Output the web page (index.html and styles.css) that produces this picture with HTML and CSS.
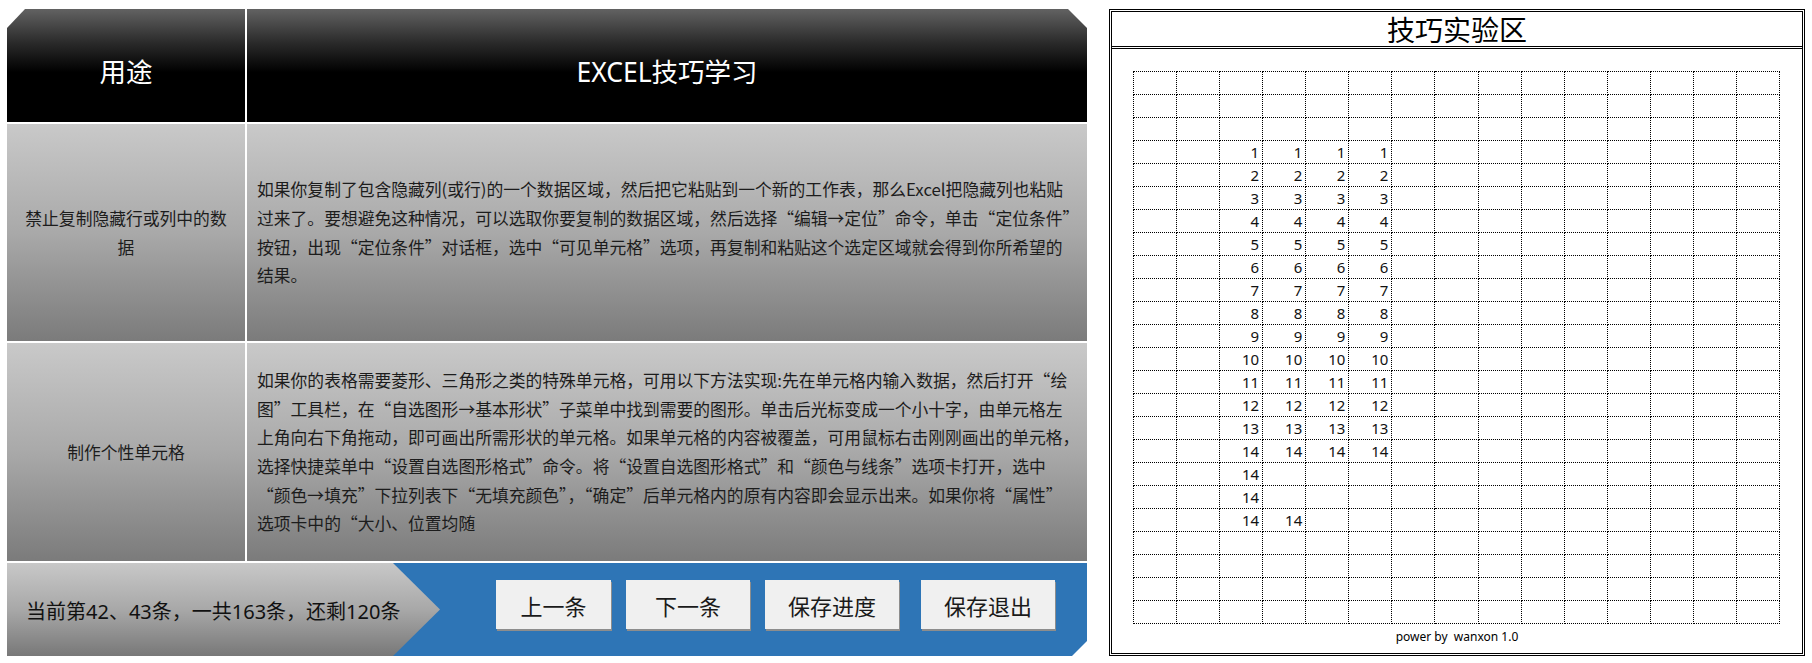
FILE: index.html
```html
<!DOCTYPE html>
<html lang="zh-CN">
<head>
<meta charset="utf-8">
<title>EXCEL技巧学习</title>
<link rel="stylesheet" href="styles.css">
</head>
<body>
<section class="board">
  <div class="board-head">用途</div>
  <div class="board-head">EXCEL技巧学习</div>

  <div class="board-cell use">禁止复制隐藏行或列中的数据</div>
  <div class="board-cell tip"><p>如果你复制了包含隐藏列(或行)的一个数据区域，然后把它粘贴到一个新的工作表，那么Excel把隐藏列也粘贴<br>过来了。要想避免这种情况，可以选取你要复制的数据区域，然后选择“编辑→定位”命令，单击“定位条件”<br>按钮，出现“定位条件”对话框，选中“可见单元格”选项，再复制和粘贴这个选定区域就会得到你所希望的<br>结果。</p></div>

  <div class="board-cell use">制作个性单元格</div>
  <div class="board-cell tip"><p>如果你的表格需要菱形、三角形之类的特殊单元格，可用以下方法实现:先在单元格内输入数据，然后打开“绘<br>图”工具栏，在“自选图形→基本形状”子菜单中找到需要的图形。单击后光标变成一个小十字，由单元格左<br>上角向右下角拖动，即可画出所需形状的单元格。如果单元格的内容被覆盖，可用鼠标右击刚刚画出的单元格，<br>选择快捷菜单中“设置自选图形格式”命令。将“设置自选图形格式”和“颜色与线条”选项卡打开，选中<br>“颜色→填充”下拉列表下“无填充颜色”，“确定”后单元格内的原有内容即会显示出来。如果你将“属性”<br>选项卡中的“大小、位置均随</p></div>

  <footer class="board-foot">
    <div class="status">当前第42、43条，一共163条，还剩120条</div>
    <div class="actions">
      <button class="btn btn-prev">上一条</button>
      <button class="btn btn-next">下一条</button>
      <button class="btn">保存进度</button>
      <button class="btn btn-exit">保存退出</button>
    </div>
  </footer>
</section>

<section class="lab">
  <h1 class="lab-title">技巧实验区</h1>
  <table class="sheet">
    <tr><td></td><td></td><td></td><td></td><td></td><td></td><td></td><td></td><td></td><td></td><td></td><td></td><td></td><td></td><td></td></tr>
    <tr><td></td><td></td><td></td><td></td><td></td><td></td><td></td><td></td><td></td><td></td><td></td><td></td><td></td><td></td><td></td></tr>
    <tr><td></td><td></td><td></td><td></td><td></td><td></td><td></td><td></td><td></td><td></td><td></td><td></td><td></td><td></td><td></td></tr>
    <tr><td></td><td></td><td>1</td><td>1</td><td>1</td><td>1</td><td></td><td></td><td></td><td></td><td></td><td></td><td></td><td></td><td></td></tr>
    <tr><td></td><td></td><td>2</td><td>2</td><td>2</td><td>2</td><td></td><td></td><td></td><td></td><td></td><td></td><td></td><td></td><td></td></tr>
    <tr><td></td><td></td><td>3</td><td>3</td><td>3</td><td>3</td><td></td><td></td><td></td><td></td><td></td><td></td><td></td><td></td><td></td></tr>
    <tr><td></td><td></td><td>4</td><td>4</td><td>4</td><td>4</td><td></td><td></td><td></td><td></td><td></td><td></td><td></td><td></td><td></td></tr>
    <tr><td></td><td></td><td>5</td><td>5</td><td>5</td><td>5</td><td></td><td></td><td></td><td></td><td></td><td></td><td></td><td></td><td></td></tr>
    <tr><td></td><td></td><td>6</td><td>6</td><td>6</td><td>6</td><td></td><td></td><td></td><td></td><td></td><td></td><td></td><td></td><td></td></tr>
    <tr><td></td><td></td><td>7</td><td>7</td><td>7</td><td>7</td><td></td><td></td><td></td><td></td><td></td><td></td><td></td><td></td><td></td></tr>
    <tr><td></td><td></td><td>8</td><td>8</td><td>8</td><td>8</td><td></td><td></td><td></td><td></td><td></td><td></td><td></td><td></td><td></td></tr>
    <tr><td></td><td></td><td>9</td><td>9</td><td>9</td><td>9</td><td></td><td></td><td></td><td></td><td></td><td></td><td></td><td></td><td></td></tr>
    <tr><td></td><td></td><td>10</td><td>10</td><td>10</td><td>10</td><td></td><td></td><td></td><td></td><td></td><td></td><td></td><td></td><td></td></tr>
    <tr><td></td><td></td><td>11</td><td>11</td><td>11</td><td>11</td><td></td><td></td><td></td><td></td><td></td><td></td><td></td><td></td><td></td></tr>
    <tr><td></td><td></td><td>12</td><td>12</td><td>12</td><td>12</td><td></td><td></td><td></td><td></td><td></td><td></td><td></td><td></td><td></td></tr>
    <tr><td></td><td></td><td>13</td><td>13</td><td>13</td><td>13</td><td></td><td></td><td></td><td></td><td></td><td></td><td></td><td></td><td></td></tr>
    <tr><td></td><td></td><td>14</td><td>14</td><td>14</td><td>14</td><td></td><td></td><td></td><td></td><td></td><td></td><td></td><td></td><td></td></tr>
    <tr><td></td><td></td><td>14</td><td></td><td></td><td></td><td></td><td></td><td></td><td></td><td></td><td></td><td></td><td></td><td></td></tr>
    <tr><td></td><td></td><td>14</td><td></td><td></td><td></td><td></td><td></td><td></td><td></td><td></td><td></td><td></td><td></td><td></td></tr>
    <tr><td></td><td></td><td>14</td><td>14</td><td></td><td></td><td></td><td></td><td></td><td></td><td></td><td></td><td></td><td></td><td></td></tr>
    <tr><td></td><td></td><td></td><td></td><td></td><td></td><td></td><td></td><td></td><td></td><td></td><td></td><td></td><td></td><td></td></tr>
    <tr><td></td><td></td><td></td><td></td><td></td><td></td><td></td><td></td><td></td><td></td><td></td><td></td><td></td><td></td><td></td></tr>
    <tr><td></td><td></td><td></td><td></td><td></td><td></td><td></td><td></td><td></td><td></td><td></td><td></td><td></td><td></td><td></td></tr>
    <tr><td></td><td></td><td></td><td></td><td></td><td></td><td></td><td></td><td></td><td></td><td></td><td></td><td></td><td></td><td></td></tr>
  </table>
  <p class="power">power by  wanxon 1.0</p>
</section>
</body>
</html>
```

FILE: styles.css
```css
* {
  box-sizing: border-box;
}

body {
  margin: 9px 7px;
  background: #fff;
  display: flex;
  gap: 22px;
  font-family: "Noto Sans CJK SC", "Noto Sans", sans-serif;
  color: #1a1a1a;
}

/* ---------- left board ---------- */
.board {
  width: 1080px;
  height: 647px;
  flex: none;
  display: grid;
  grid-template-columns: 238px 840px;
  grid-template-rows: 113px 217px 218px 93px;
  gap: 2px;
  clip-path: polygon(18px 0, calc(100% - 19px) 0, 100% 19px, 100% calc(100% - 15px), calc(100% - 15px) 100%, 0 100%, 0 19px);
}

.board-head {
  background: linear-gradient(#626262 0%, #2a2a2a 30%, #000 56%, #000 100%);
  color: #fff;
  font-family: "Noto Sans", "Noto Sans CJK SC", sans-serif;
  font-size: 26.5px;
  display: flex;
  align-items: center;
  justify-content: center;
  padding-top: 9px;
}

.board-cell {
  background: linear-gradient(#c9c9c9, #a9a9a9 50%, #7b7b7b);
  display: flex;
  align-items: center;
  font-size: 16.8px;
  line-height: 28.7px;
  color: #1c1c1c;
}

.board-cell p {
  margin: 0;
}

.board-cell.use {
  justify-content: center;
  text-align: center;
  padding: 0 12px;
}

.board-cell.tip {
  padding-left: 10px;
  white-space: nowrap;
}

.board-foot {
  grid-column: 1 / -1;
  background: #2e75b6;
  display: flex;
  align-items: flex-start;
}

.status {
  width: 433px;
  height: 100%;
  flex: none;
  background: linear-gradient(#c8c8c8, #a8a8a8 50%, #787878);
  clip-path: polygon(0 0, 386px 0, 100% 50%, 386px 100%, 0 100%);
  display: flex;
  align-items: center;
  padding: 2px 0 0 19px;
  font-family: "Noto Sans", "Noto Sans CJK SC", sans-serif;
  font-size: 20px;
  color: #111;
  white-space: nowrap;
}

.actions {
  display: flex;
  gap: 15px;
  margin: 17px 0 0 56px;
}

.btn {
  width: 134px;
  height: 49px;
  border: 0;
  padding: 0;
  background: #f0f0f0;
  box-shadow: 1px 2px 0 #8d8d8d;
  font-family: "Noto Sans CJK SC", sans-serif;
  font-size: 22px;
  color: #1a1a1a;
}

.btn-prev {
  width: 115px;
}

.btn-next {
  width: 124px;
}

.btn-exit {
  margin-left: 7px;
}

/* ---------- right lab ---------- */
.lab {
  width: 696px;
  height: 647px;
  flex: none;
  border: 3px double #000;
  display: flex;
  flex-direction: column;
}

.lab-title {
  margin: 0;
  height: 37px;
  border-bottom: 3px double #000;
  text-align: center;
  font-size: 28px;
  font-weight: normal;
  line-height: 34px;
  color: #000;
}

.sheet {
  margin: 22px 0 0 21px;
  width: 647px;
  border-collapse: collapse;
  table-layout: fixed;
}

.sheet td {
  border: 1px dotted #000;
  height: 23px;
  padding: 0 3px 0 0;
  text-align: right;
  vertical-align: middle;
  font-family: "Noto Sans", sans-serif;
  font-size: 15px;
  line-height: 20px;
  color: #111;
}

.power {
  margin: 5px 0 0;
  text-align: center;
  font-family: "Noto Sans", sans-serif;
  font-size: 12px;
  line-height: 16px;
  white-space: pre;
  color: #000;
}
```
